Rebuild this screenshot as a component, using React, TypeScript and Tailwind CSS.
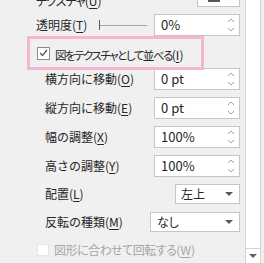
import React from "react";

const font = { fontFamily: '"Noto Sans CJK JP", "Noto Sans", sans-serif' };

function Spinner() {
  return (
    <svg width="8" height="16" viewBox="0 0 8 16" className="mr-[4px]">
      <path d="M1 5 L4 2 L7 5" fill="none" stroke="#a0a0a0" strokeWidth="1" />
      <path d="M1 11 L4 14 L7 11" fill="none" stroke="#a0a0a0" strokeWidth="1" />
    </svg>
  );
}

function Caret() {
  return (
    <svg width="8" height="5" viewBox="0 0 8 5" className="mr-[6px]">
      <path d="M0 0 L8 0 L4 4 Z" fill="#595959" />
    </svg>
  );
}

function NumBox({ value }: { value: string }) {
  return (
    <div className="w-[86px] h-[22px] border border-[#c6c6c6] bg-white flex items-center justify-between pl-[6px]">
      <span className="text-[13px] text-[#262626]">{value}</span>
      <Spinner />
    </div>
  );
}

function Label({ text, k, className = "" }: { text: string; k: string; className?: string }) {
  return (
    <span className="whitespace-nowrap text-[12px] text-[#262626]">
      <span className={className}>{text}</span>(<u className="underline-offset-2">{k}</u>)
    </span>
  );
}

function InputRow({ text, k, value, className }: { text: string; k: string; value: string; className: string }) {
  return (
    <div className={"flex items-center justify-between h-[22px] pl-[45px] pr-[4px] " + className}>
      <Label text={text} k={k} />
      <NumBox value={value} />
    </div>
  );
}

export default function App() {
  return (
    <div style={font} className="w-[264px] h-[263px] bg-[#f0f0f0] flex overflow-hidden">
      <div className="w-[244px] flex flex-col">
        {/* Texture row (cut off) */}
        <div className="flex items-end justify-between h-[23px] -mt-[16px] pl-[36px] pr-[4px]">
          <span className="leading-[14px] -mb-[1px]">
            <Label text="テクスチャ" k="U" className="[font-feature-settings:'palt'] tracking-[-0.8px]" />
          </span>
          <div className="w-[43px] h-[23px] border border-[#c6c6c6] bg-white flex items-end pl-[10px] pb-[4px]">
            <div className="w-[12px] h-[3px] bg-[#595959]" />
          </div>
        </div>

        {/* Transparency */}
        <div className="flex items-center h-[22px] mt-[7px] pl-[36px] pr-[4px]">
          <Label text="透明度" k="T" />
          <div className="flex items-center ml-[12px] w-[48px] h-[12px]">
            <div className="w-[1px] h-[10px] bg-[#595959]" />
            <div className="flex-1 h-[1px] bg-[#a6a6a6]" />
          </div>
          <div className="ml-auto">
            <NumBox value="0%" />
          </div>
        </div>

        {/* Tile checkbox with pink highlight */}
        <div className="ml-[27px] w-[177px] h-[34px] border-[3px] border-[#f6b6cf] flex items-center pl-[7px] relative z-10">
          <div className="shrink-0 w-[13px] h-[13px] border border-[#8a8a8a] bg-white flex items-center justify-center">
            <svg width="9" height="8" viewBox="0 0 9 8">
              <path d="M1 4 L3.5 6.5 L8 1" fill="none" stroke="#555" strokeWidth="1.2" />
            </svg>
          </div>
          <span className="ml-[5px] whitespace-nowrap">
            <Label text="図をテクスチャとして並べる" k="I" className="[font-feature-settings:'palt'] text-[11.5px] tracking-[-1.5px]" />
          </span>
        </div>

        <InputRow text="横方向に移動" k="O" value="0 pt" className="-mt-[2px]" />
        <InputRow text="縦方向に移動" k="E" value="0 pt" className="mt-[7px]" />
        <InputRow text="幅の調整" k="X" value="100%" className="mt-[7px]" />
        <InputRow text="高さの調整" k="Y" value="100%" className="mt-[7px]" />

        {/* Alignment */}
        <div className="flex items-center justify-between h-[20px] mt-[7px] pl-[45px] pr-[4px]">
          <Label text="配置" k="L" />
          <div className="w-[65px] h-[20px] border border-[#c6c6c6] bg-white flex items-center justify-between pl-[5px]">
            <span className="text-[12px] text-[#262626]">左上</span>
            <Caret />
          </div>
        </div>

        {/* Mirror type */}
        <div className="flex items-center justify-between h-[20px] mt-[8px] pl-[45px] pr-[4px]">
          <Label text="反転の種類" k="M" />
          <div className="w-[90px] h-[20px] border border-[#c6c6c6] bg-white flex items-center justify-between pl-[6px]">
            <span className="text-[12px] text-[#262626] [font-feature-settings:'palt']">なし</span>
            <Caret />
          </div>
        </div>

        {/* Rotate with shape (disabled) */}
        <div className="flex items-center h-[18px] mt-[9px] pl-[37px]">
          <div className="w-[12px] h-[12px] bg-white border border-[#e6e6e6]" />
          <span className="ml-[5px] whitespace-nowrap text-[12px] text-[#a6a6a6]">
            <span className="[font-feature-settings:'palt'] tracking-[-0.5px]">図形に合わせて回転する</span>(<u className="underline-offset-2">W</u>)
          </span>
        </div>
      </div>

      {/* Scrollbar */}
      <div className="w-[16px] ml-[1px] h-full bg-white border-x border-[#d4d4d4] flex flex-col justify-end">
        <div className="h-[15px] border-t border-[#d4d4d4] flex items-center justify-center">
          <svg width="8" height="5" viewBox="0 0 8 5">
            <path d="M0 0 L8 0 L4 4 Z" fill="#606060" />
          </svg>
        </div>
      </div>
    </div>
  );
}
